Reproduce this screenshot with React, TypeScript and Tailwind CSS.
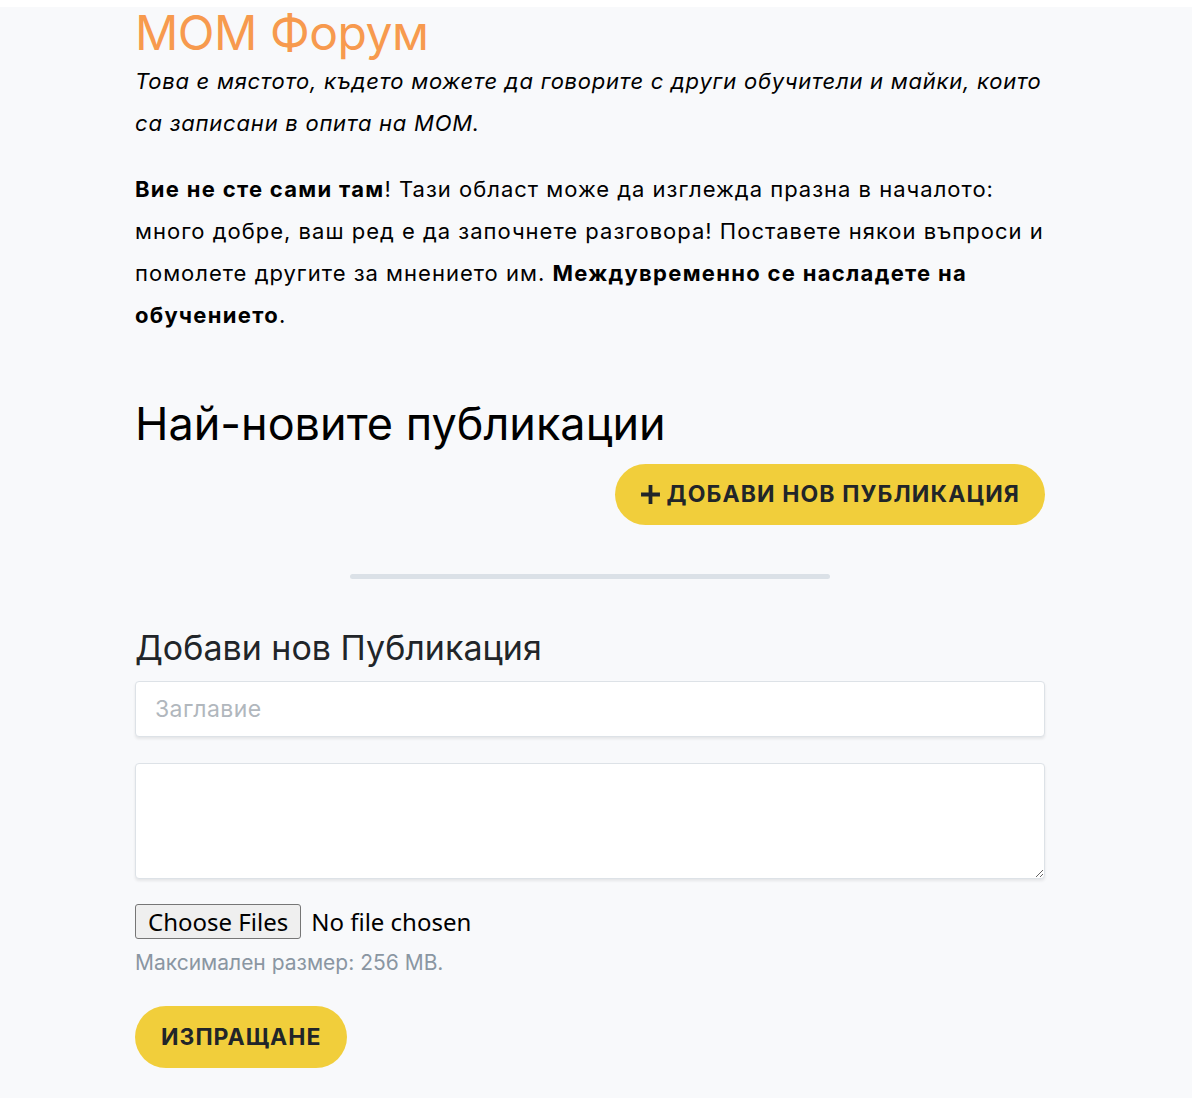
import React from 'react';

const font = { fontFamily: 'Inter, "Noto Sans", sans-serif' };

const App: React.FC = () => {
  return (
    <div className="min-h-[1098px] bg-[#f8f9fb] text-[#212529]" style={font}>
      <div className="h-[7px] bg-white"></div>
      <div className="ml-[135px] w-[910px]">
        <h1 className="text-[48px] leading-[52px] text-[#f79a4e] tracking-[-0.5px]">МОМ Форум</h1>
        <p className="mt-[1px] text-[22px] leading-[42px] italic tracking-[0.75px] text-black">
          Това е мястото, където можете да говорите с други обучители и майки, които са записани в опита на МОМ.
        </p>
        <p className="mt-[24px] text-[22px] leading-[42px] tracking-[1px] text-black">
          <strong className="tracking-[1.3px]">Вие не сте сами там</strong>! Тази област може да изглежда празна в началото: много добре, ваш ред е да започнете разговора! Поставете някои въпроси и помолете другите за мнението им.{' '}
          <strong className="tracking-[1.3px]">Междувременно се насладете на обучението</strong>.
        </p>

        <h2 className="mt-[60px] text-[45px] leading-[56px] text-black">Най-новите публикации</h2>
        <div className="mt-[12px] flex justify-end">
          <button className="flex h-[61px] items-center gap-[6px] rounded-full bg-[#f1ce3b] pl-[25px] pr-[25px] text-[23px] font-bold uppercase tracking-[1.1px] text-[#212529]">
            <svg width="21" height="21" viewBox="0 0 20 20">
              <path d="M10 1v18M1 10h18" stroke="#212529" strokeWidth="3.6" />
            </svg>
            Добави нов публикация
          </button>
        </div>

        <div className="mt-[49px] flex justify-center">
          <div className="h-[5px] w-[480px] rounded-full bg-[#dbe1e7]"></div>
        </div>

        <h3 className="mt-[47px] text-[34px] leading-[44px] text-[#212529]">Добави нов Публикация</h3>
        <form className="mt-[11px] flex flex-col" onSubmit={(e) => e.preventDefault()}>
          <input
            type="text"
            placeholder="Заглавие"
            className="h-[56px] w-full rounded-[4px] border border-[#dde2e7] bg-white px-[19px] text-[23px] tracking-[0.4px] text-[#495057] shadow-[0_2px_3px_rgba(0,0,0,0.08)] outline-none placeholder:text-[#b1b7bd]"
          />
          <textarea
            className="mt-[26px] h-[116px] w-full rounded-[4px] border border-[#dde2e7] bg-white px-[19px] py-[10px] text-[22px] shadow-[0_2px_3px_rgba(0,0,0,0.08)] outline-none"
          ></textarea>
          <input
            type="file"
            multiple
            className="mt-[25px] h-[35px] text-[24px] leading-[30px] text-black file:mr-[10px] file:h-[35px] file:rounded-[3px] file:border file:border-[#767676] file:bg-[#efefef] file:px-[12px] file:text-[24px] file:text-black"
            style={{ fontFamily: '"Noto Sans", sans-serif' }}
          />
          <p className="mt-[10px] text-[21px] leading-[28px] text-[#8a96a2]">Максимален размер: 256 MB.</p>
          <div className="mt-[29px]">
            <button className="h-[62px] rounded-full bg-[#f1ce3b] px-[26px] text-[23px] font-bold uppercase tracking-[1px] text-[#212529]">
              Изпращане
            </button>
          </div>
        </form>
      </div>
    </div>
  );
};

export default App;
